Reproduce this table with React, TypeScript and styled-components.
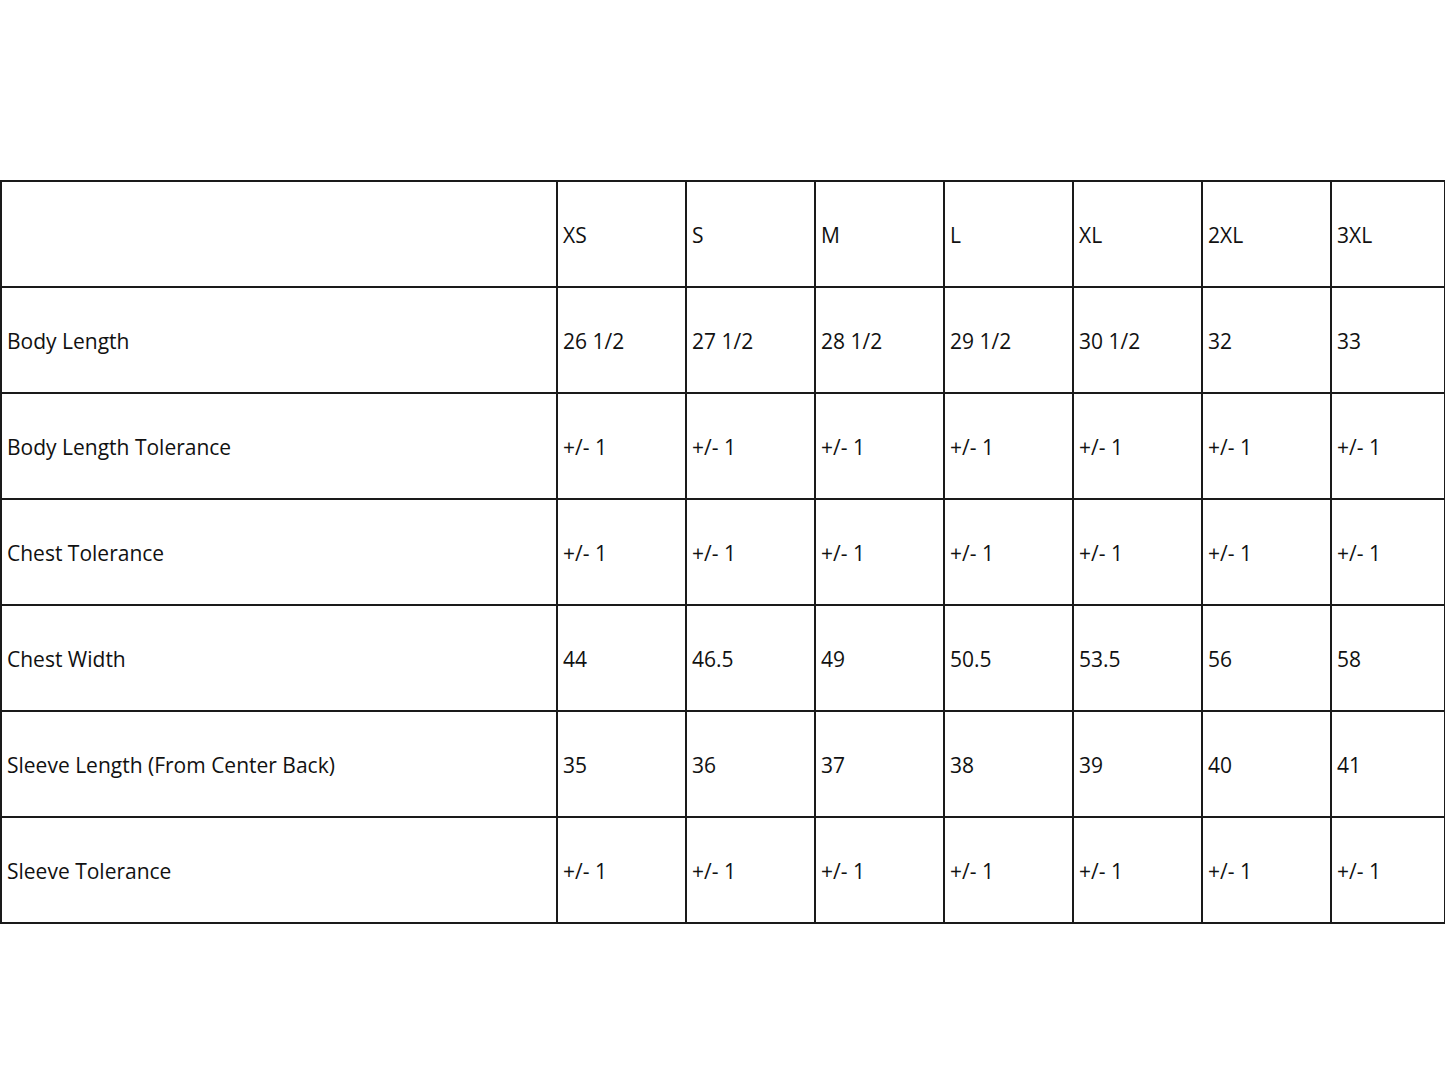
import React from 'react';
import styled, { createGlobalStyle } from 'styled-components';

const GlobalStyle = createGlobalStyle`
    html, body {
        margin: 0;
        padding: 0;
        background: #ffffff;
    }
    body {
        font-family: 'Open Sans', 'Liberation Sans', sans-serif;
        color: #111111;
    }
`;

const Page = styled.div`
    width: 1445px;
    padding-top: 180px;
`;

const Table = styled.table`
    width: 1444px;
    border-collapse: collapse;
    table-layout: fixed;
`;

const Cell = styled.td<{ $width?: number }>`
    ${({ $width }) => ($width ? `width: ${$width}px;` : '')}
    height: 106px;
    padding: 2px 0 0 5px;
    border: 2px solid #1a1a1a;
    font-size: 21px;
    line-height: 1;
    vertical-align: middle;
    box-sizing: border-box;
    white-space: nowrap;
`;

const sizes = ['XS', 'S', 'M', 'L', 'XL', '2XL', '3XL'];
const widths = [556, 129, 129, 129, 129, 129, 129, 114];

const tol = Array(7).fill('+/- 1');

const rows: { label: string; values: string[] }[] = [
    { label: 'Body Length', values: ['26 1/2', '27 1/2', '28 1/2', '29 1/2', '30 1/2', '32', '33'] },
    { label: 'Body Length Tolerance', values: tol },
    { label: 'Chest Tolerance', values: tol },
    { label: 'Chest Width', values: ['44', '46.5', '49', '50.5', '53.5', '56', '58'] },
    { label: 'Sleeve Length (From Center Back)', values: ['35', '36', '37', '38', '39', '40', '41'] },
    { label: 'Sleeve Tolerance', values: tol },
];

const App: React.FC = () => (
    <Page>
        <GlobalStyle />
        <Table>
            <tbody>
                <tr>
                    <Cell $width={widths[0]} />
                    {sizes.map((s, i) => (
                        <Cell key={s} $width={widths[i + 1]}>
                            {s}
                        </Cell>
                    ))}
                </tr>
                {rows.map((row) => (
                    <tr key={row.label}>
                        <Cell>{row.label}</Cell>
                        {row.values.map((v, i) => (
                            <Cell key={i}>{v}</Cell>
                        ))}
                    </tr>
                ))}
            </tbody>
        </Table>
    </Page>
);

export default App;
